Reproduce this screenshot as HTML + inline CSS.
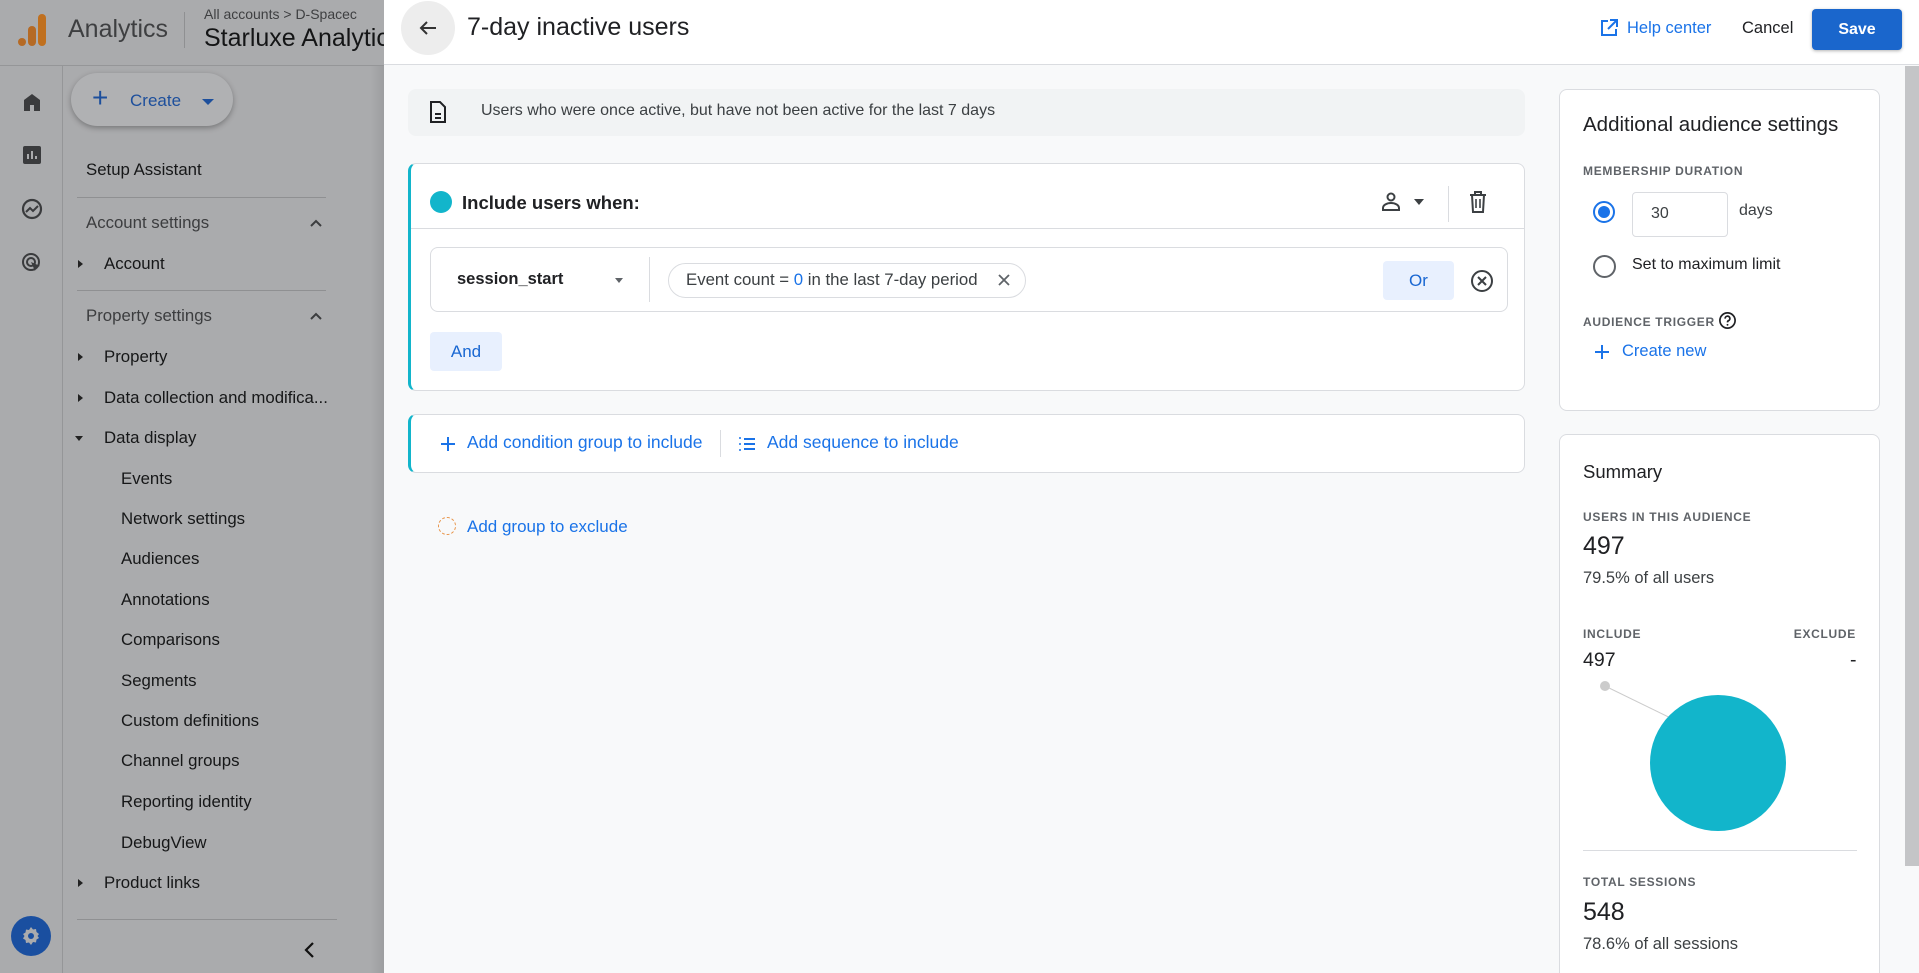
<!DOCTYPE html>
<html><head><meta charset="utf-8"><style>
*{box-sizing:border-box;margin:0;padding:0}
html,body{width:1919px;height:973px;overflow:hidden}
body{font-family:"Liberation Sans",sans-serif;background:#f8f9fa;position:relative;color:#202124}
.abs{position:absolute}
#left{left:0;top:0;width:384px;height:973px;background:#aaabad;color:#161718;overflow:hidden}
#left .t{position:absolute;font-size:16.8px;white-space:nowrap}
.hd{color:#3c3d3f!important}
.tri{position:absolute;width:0;height:0;border-top:4px solid transparent;border-bottom:4px solid transparent;border-left:5px solid #222}
.dv{position:absolute;height:1px;background:#8f9092}
#dlg{left:384px;top:0;width:1535px;height:973px;background:#f8f9fa;overflow:hidden}
.card{position:absolute;background:#fff;border:1px solid #dadce0;border-radius:8px}
.lbl{position:absolute;font-size:12px;letter-spacing:0.7px;color:#5f6368;font-weight:bold;white-space:nowrap}
.blue{color:#1a73e8}
</style></head><body>
<div id="left" class="abs">
  <div class="abs" style="left:0;top:65px;width:384px;height:1px;background:#959698"></div>
  <div class="abs" style="left:62px;top:66px;width:1px;height:907px;background:#959698"></div>
  <div class="abs" style="left:18px;top:38px;width:8px;height:8px;border-radius:4px;background:#b56a25"></div>
  <div class="abs" style="left:28px;top:26px;width:8px;height:20px;border-radius:4px;background:#b56a25"></div>
  <div class="abs" style="left:38px;top:14px;width:8px;height:32px;border-radius:4px;background:#c0701f"></div>
  <div class="abs" style="left:68px;top:15px;font-size:25px;color:#3e3f41">Analytics</div>
  <div class="abs" style="left:184px;top:12px;width:1px;height:36px;background:#8f9092"></div>
  <div class="abs" style="left:204px;top:6px;font-size:14px;color:#3e3f41">All accounts &gt; D-Spacec</div>
  <div class="abs" style="left:204px;top:24px;font-size:25px;color:#141516;white-space:nowrap">Starluxe Analytics</div>
  <svg class="abs" style="left:20px;top:90px" width="24" height="24" viewBox="0 0 24 24"><path d="M4 21V10l8-6 8 6v11h-6v-6h-4v6z" fill="#3a3b3d"/></svg>
  <svg class="abs" style="left:20px;top:143px" width="24" height="24" viewBox="0 0 24 24"><rect x="3" y="3" width="18" height="18" rx="2" fill="#3a3b3d"/><path d="M8 16v-5M12 16V8M16 16v-3" stroke="#aaabad" stroke-width="2"/></svg>
  <svg class="abs" style="left:20px;top:197px" width="24" height="24" viewBox="0 0 24 24"><circle cx="12" cy="12" r="9" fill="none" stroke="#3a3b3d" stroke-width="2.2"/><path d="M6 15l4-4 3 3 5-5" fill="none" stroke="#3a3b3d" stroke-width="2"/></svg>
  <svg class="abs" style="left:20px;top:251px" width="24" height="24" viewBox="0 0 24 24"><circle cx="11" cy="11" r="8" fill="none" stroke="#3a3b3d" stroke-width="2"/><circle cx="11" cy="11" r="4" fill="none" stroke="#3a3b3d" stroke-width="2"/><path d="M11 11l9 4-4 1-1 4z" fill="#3a3b3d"/></svg>
  <div class="abs" style="left:11px;top:916px;width:40px;height:40px;border-radius:20px;background:#1a4fa0"></div>
  <svg class="abs" style="left:19px;top:924px" width="24" height="24" viewBox="0 0 24 24"><path d="M12 3l2 2.5 3-.5.5 3L20 10l-1.5 2 1.5 2-2.5 1.5-.5 3-3-.5L12 21l-2-2.5-3 .5-.5-3L4 14.5 5.5 12 4 10l2.5-1.5.5-3 3 .5z" fill="#aaabad"/><circle cx="12" cy="12" r="3" fill="#1a4fa0"/></svg>
  <div class="abs" style="left:71px;top:73px;width:162px;height:53px;border-radius:27px;background:#b0b1b3;box-shadow:0 2px 6px rgba(0,0,0,.3)"></div>
  <div class="abs" style="left:92px;top:84px;font-size:28px;color:#1d4f9c;line-height:1">+</div>
  <div class="abs" style="left:130px;top:91px;font-size:17px;color:#1d4f9c">Create</div>
  <div class="abs" style="left:202px;top:99px;border-left:6px solid transparent;border-right:6px solid transparent;border-top:6px solid #1d4f9c"></div>
  <div class="t" style="left:86px;top:160px">Setup Assistant</div>
  <div class="dv" style="left:77px;top:197px;width:249px"></div>
  <div class="t hd" style="left:86px;top:213px">Account settings</div>
  <svg class="abs" style="left:308px;top:217px" width="16" height="12" viewBox="0 0 16 12"><path d="M3 9l5-5 5 5" fill="none" stroke="#3c3d3f" stroke-width="2"/></svg>
  <div class="tri" style="left:78px;top:260px"></div><div class="t" style="left:104px;top:254px">Account</div>
  <div class="dv" style="left:77px;top:290px;width:249px"></div>
  <div class="t hd" style="left:86px;top:306px">Property settings</div>
  <svg class="abs" style="left:308px;top:310px" width="16" height="12" viewBox="0 0 16 12"><path d="M3 9l5-5 5 5" fill="none" stroke="#3c3d3f" stroke-width="2"/></svg>
  <div class="tri" style="left:78px;top:353px"></div><div class="t" style="left:104px;top:347px">Property</div>
  <div class="tri" style="left:78px;top:394px"></div><div class="t" style="left:104px;top:388px">Data collection and modifica...</div>
  <div class="abs" style="left:75px;top:436px;border-left:4px solid transparent;border-right:4px solid transparent;border-top:5px solid #222"></div><div class="t" style="left:104px;top:428px">Data display</div>
  <div class="t" style="left:121px;top:469px">Events</div>
  <div class="t" style="left:121px;top:509px">Network settings</div>
  <div class="t" style="left:121px;top:549px">Audiences</div>
  <div class="t" style="left:121px;top:590px">Annotations</div>
  <div class="t" style="left:121px;top:630px">Comparisons</div>
  <div class="t" style="left:121px;top:671px">Segments</div>
  <div class="t" style="left:121px;top:711px">Custom definitions</div>
  <div class="t" style="left:121px;top:751px">Channel groups</div>
  <div class="t" style="left:121px;top:792px">Reporting identity</div>
  <div class="t" style="left:121px;top:833px">DebugView</div>
  <div class="tri" style="left:78px;top:879px"></div><div class="t" style="left:104px;top:873px">Product links</div>
  <div class="dv" style="left:77px;top:919px;width:260px"></div>
  <svg class="abs" style="left:300px;top:940px" width="20" height="20" viewBox="0 0 20 20"><path d="M13 3L6 10l7 7" fill="none" stroke="#111" stroke-width="2.2"/></svg>
  <div class="abs" style="left:370px;top:66px;width:14px;height:907px;background:linear-gradient(90deg,rgba(0,0,0,0),rgba(0,0,0,.08))"></div>
</div>

<div id="dlg" class="abs">
  <div class="abs" style="left:0;top:0;width:1535px;height:65px;background:#fff;border-bottom:1px solid #dadce0"></div>
  <div class="abs" style="left:17px;top:1px;width:54px;height:54px;border-radius:27px;background:#ededed"></div>
  <svg class="abs" style="left:32px;top:16px" width="24" height="24" viewBox="0 0 24 24"><path d="M20 12H5M11 6l-6 6 6 6" fill="none" stroke="#333" stroke-width="2"/></svg>
  <div class="abs" style="left:83px;top:13px;font-size:25px;color:#202124">7-day inactive users</div>
  <svg class="abs" style="left:1215px;top:18px" width="20" height="20" viewBox="0 0 20 20"><path d="M9 3H3v14h14v-6" fill="none" stroke="#1a73e8" stroke-width="2"/><path d="M11 2h7v7M18 2l-9 9" fill="none" stroke="#1a73e8" stroke-width="2"/></svg>
  <div class="abs blue" style="left:1243px;top:19px;font-size:16.5px">Help center</div>
  <div class="abs" style="left:1358px;top:19px;font-size:16.5px;color:#202124">Cancel</div>
  <div class="abs" style="left:1428px;top:9px;width:90px;height:41px;border-radius:4px;background:#1a66cc;color:#fff;font-weight:bold;font-size:16px;text-align:center;line-height:41px;box-shadow:0 1px 3px rgba(0,0,0,.3)">Save</div>
  <div class="abs" style="left:1521px;top:66px;width:14px;height:800px;background:#c4c5c7"></div>

  <div class="abs" style="left:24px;top:89px;width:1117px;height:47px;background:#f1f3f4;border-radius:8px"></div>
  <svg class="abs" style="left:44px;top:100px" width="20" height="24" viewBox="0 0 20 24"><path d="M3 2h9l5 5v15H3z" fill="none" stroke="#202124" stroke-width="2"/><path d="M7 14h6M7 18h6" stroke="#202124" stroke-width="2"/></svg>
  <div class="abs" style="left:97px;top:102px;font-size:16px;color:#3c4043">Users who were once active, but have not been active for the last 7 days</div>

  <div class="card" style="left:24px;top:163px;width:1117px;height:228px;border-left:3px solid #12b5cb"></div>
  <div class="abs" style="left:27px;top:228px;width:1113px;height:1px;background:#dadce0"></div>
  <div class="abs" style="left:46px;top:191px;width:22px;height:22px;border-radius:11px;background:#12b5cb"></div>
  <div class="abs" style="left:78px;top:192px;font-size:18.5px;font-weight:bold;color:#202124">Include users when:</div>
  <svg class="abs" style="left:996px;top:191px" width="22" height="22" viewBox="0 0 22 22"><circle cx="11" cy="6" r="3.5" fill="none" stroke="#3c4043" stroke-width="2"/><path d="M3 19v-2c0-3 4-5 8-5s8 2 8 5v2z" fill="none" stroke="#3c4043" stroke-width="2"/></svg>
  <div class="abs" style="left:1030px;top:199px;border-left:5px solid transparent;border-right:5px solid transparent;border-top:6px solid #3c4043"></div>
  <div class="abs" style="left:1064px;top:186px;width:1px;height:36px;background:#dadce0"></div>
  <svg class="abs" style="left:1083px;top:190px" width="22" height="24" viewBox="0 0 22 24"><path d="M3 5h16M8 5V2h6v3M5 5l1 17h10l1-17" fill="none" stroke="#3c4043" stroke-width="2"/><path d="M9 9v9M13 9v9" stroke="#3c4043" stroke-width="1.6"/></svg>

  <div class="abs" style="left:46px;top:247px;width:1078px;height:65px;border:1px solid #dadce0;border-radius:8px;background:#fff"></div>
  <div class="abs" style="left:73px;top:270px;font-size:16.5px;font-weight:bold;color:#202124">session_start</div>
  <div class="abs" style="left:231px;top:278px;border-left:4px solid transparent;border-right:4px solid transparent;border-top:5px solid #5f6368"></div>
  <div class="abs" style="left:265px;top:257px;width:1px;height:45px;background:#dadce0"></div>
  <div class="abs" style="left:284px;top:263px;width:358px;height:35px;border:1px solid #dadce0;border-radius:18px"></div>
  <div class="abs" style="left:302px;top:270px;font-size:16.8px;color:#3c4043;white-space:nowrap">Event count = <span class="blue">0</span> in the last 7-day period</div>
  <svg class="abs" style="left:612px;top:272px" width="16" height="16" viewBox="0 0 16 16"><path d="M3 3l10 10M13 3L3 13" stroke="#5f6368" stroke-width="1.8"/></svg>
  <div class="abs blue" style="left:999px;top:261px;width:71px;height:39px;background:#e8f0fe;border-radius:4px;text-align:center;line-height:39px;font-size:17px;color:#1967d2">Or</div>
  <svg class="abs" style="left:1085px;top:268px" width="26" height="26" viewBox="0 0 26 26"><circle cx="13" cy="13" r="10" fill="none" stroke="#3c4043" stroke-width="2"/><path d="M9 9l8 8M17 9l-8 8" stroke="#3c4043" stroke-width="2"/></svg>
  <div class="abs" style="left:46px;top:332px;width:72px;height:39px;background:#e8f0fe;border-radius:4px;text-align:center;line-height:39px;font-size:17px;color:#1967d2">And</div>

  <div class="card" style="left:24px;top:414px;width:1117px;height:59px;border-left:3px solid #12b5cb"></div>
  <svg class="abs" style="left:55px;top:435px" width="18" height="18" viewBox="0 0 18 18"><path d="M9 2v14M2 9h14" stroke="#1a73e8" stroke-width="2"/></svg>
  <div class="abs blue" style="left:83px;top:432px;font-size:17.5px;white-space:nowrap">Add condition group to include</div>
  <div class="abs" style="left:336px;top:430px;width:1px;height:27px;background:#dadce0"></div>
  <svg class="abs" style="left:354px;top:435px" width="18" height="18" viewBox="0 0 18 18"><path d="M6 4h11M6 9h11M6 14h11" stroke="#1a73e8" stroke-width="2"/><path d="M1 3h2M1 9h2M1 15h2" stroke="#1a73e8" stroke-width="1.5"/></svg>
  <div class="abs blue" style="left:383px;top:432px;font-size:17.5px;white-space:nowrap">Add sequence to include</div>
  <div class="abs" style="left:54px;top:517px;width:18px;height:18px;border-radius:9px;border:1.5px dashed #e8954a"></div>
  <div class="abs blue" style="left:83px;top:517px;font-size:17px">Add group to exclude</div>

  <div class="card" style="left:1175px;top:89px;width:321px;height:322px"></div>
  <div class="abs" style="left:1199px;top:113px;font-size:20.5px;color:#202124;white-space:nowrap">Additional audience settings</div>
  <div class="lbl" style="left:1199px;top:164px">MEMBERSHIP DURATION</div>
  <div class="abs" style="left:1209px;top:201px;width:22px;height:22px;border-radius:11px;border:2px solid #1a73e8"></div>
  <div class="abs" style="left:1214px;top:206px;width:12px;height:12px;border-radius:6px;background:#1a73e8"></div>
  <div class="abs" style="left:1248px;top:192px;width:96px;height:45px;border:1px solid #dadce0;border-radius:4px"></div>
  <div class="abs" style="left:1267px;top:205px;font-size:16px;color:#3c4043">30</div>
  <div class="abs" style="left:1355px;top:202px;font-size:16px;color:#3c4043">days</div>
  <div class="abs" style="left:1209px;top:255px;width:23px;height:23px;border-radius:12px;border:2px solid #5f6368"></div>
  <div class="abs" style="left:1248px;top:256px;font-size:16px;color:#202124">Set to maximum limit</div>
  <div class="lbl" style="left:1199px;top:315px">AUDIENCE TRIGGER</div>
  <svg class="abs" style="left:1334px;top:311px" width="19" height="19" viewBox="0 0 20 20"><circle cx="10" cy="10" r="8" fill="none" stroke="#202124" stroke-width="1.8"/><path d="M7.5 8a2.5 2.5 0 1 1 3.5 2.2c-.8.4-1 .9-1 1.8" fill="none" stroke="#202124" stroke-width="1.8"/><circle cx="10" cy="14.5" r="1" fill="#202124"/></svg>
  <svg class="abs" style="left:1209px;top:343px" width="18" height="18" viewBox="0 0 18 18"><path d="M9 2v14M2 9h14" stroke="#1a73e8" stroke-width="2"/></svg>
  <div class="abs blue" style="left:1238px;top:342px;font-size:16.5px">Create new</div>

  <div class="card" style="left:1175px;top:434px;width:321px;height:560px"></div>
  <div class="abs" style="left:1199px;top:461px;font-size:18.5px;color:#202124">Summary</div>
  <div class="lbl" style="left:1199px;top:510px">USERS IN THIS AUDIENCE</div>
  <div class="abs" style="left:1199px;top:532px;font-size:25px;color:#202124">497</div>
  <div class="abs" style="left:1199px;top:569px;font-size:16.5px;color:#3c4043">79.5% of all users</div>
  <div class="lbl" style="left:1199px;top:627px">INCLUDE</div>
  <div class="lbl" style="left:1400px;top:627px;width:72px;text-align:right">EXCLUDE</div>
  <div class="abs" style="left:1199px;top:649px;font-size:19.5px;color:#202124">497</div>
  <div class="abs" style="left:1466px;top:649px;font-size:19.5px;color:#202124">-</div>
  <svg class="abs" style="left:1175px;top:670px" width="321" height="170"><line x1="46" y1="16" x2="130" y2="57" stroke="#ccc" stroke-width="1"/><circle cx="46" cy="16" r="5" fill="#ccc"/><circle cx="159" cy="93" r="68" fill="#12b5cb"/></svg>
  <div class="abs" style="left:1199px;top:850px;width:274px;height:1px;background:#dadce0"></div>
  <div class="lbl" style="left:1199px;top:875px">TOTAL SESSIONS</div>
  <div class="abs" style="left:1199px;top:898px;font-size:25px;color:#202124">548</div>
  <div class="abs" style="left:1199px;top:935px;font-size:16.5px;color:#3c4043">78.6% of all sessions</div>
</div>
</body></html>
